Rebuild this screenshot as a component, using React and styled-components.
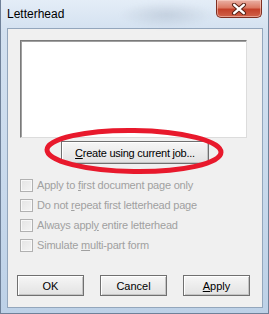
import React from 'react';
import styled, { createGlobalStyle } from 'styled-components';

const GlobalStyle = createGlobalStyle`
  html, body {
    margin: 0;
    padding: 0;
    background: #c9daed;
  }
  * {
    box-sizing: border-box;
  }
`;

const Window = styled.div`
  position: relative;
  width: 269px;
  height: 314px;
  display: flex;
  flex-direction: column;
  overflow: hidden;
  border: 1px solid #6f8199;
  border-top: 0;
  background: linear-gradient(180deg, #e4edf7 0%, #d3e1f0 10%, #c8d9ec 60%, #bdd1e7 100%);
  font-family: 'Liberation Sans', Arial, sans-serif;
`;

const Haze = styled.div`
  position: absolute;
  left: 118px;
  top: 2px;
  width: 95px;
  height: 26px;
  background: radial-gradient(ellipse at center, rgba(150, 165, 185, 0.35) 0%, rgba(150, 165, 185, 0) 70%);
  filter: blur(2px);
`;

const TitleBar = styled.div`
  position: relative;
  height: 28px;
  display: flex;
  align-items: flex-start;
  padding-left: 6px;
`;

const Title = styled.span`
  padding-top: 7px;
  font-size: 12px;
  line-height: 15px;
  color: #000;
`;

const CloseButton = styled.div`
  margin-left: auto;
  margin-right: 6px;
  width: 46px;
  height: 18px;
  display: flex;
  align-items: center;
  justify-content: center;
  border: 1px solid #7e2f22;
  border-top: 0;
  border-radius: 0 0 5px 5px;
  background: linear-gradient(180deg, #eab2a6 0%, #dc7a64 45%, #c4412a 55%, #d0624a 100%);
  box-shadow: inset 0 0 0 1px rgba(255, 220, 210, 0.5);
`;

const Client = styled.div`
  flex: 1;
  margin: 0 5px 5px 6px;
  display: flex;
  flex-direction: column;
  padding-top: 11px;
  background: #f0f0f0;
  border: 1px solid #93a6bc;
  font-size: 11px;
  letter-spacing: -0.2px;
`;

const Upper = styled.div`
  display: flex;
  flex-direction: column;
  padding-left: 12px;
`;

const ListBox = styled.div`
  width: 227px;
  height: 98px;
  background: #fff;
  border-style: solid;
  border-width: 1px;
  border-color: #7a7a7a #dcdcdc #dcdcdc #7a7a7a;
  box-shadow: inset 1px 1px 0 #a0a0a0;
`;

const CreateWrap = styled.div`
  position: relative;
  margin: 3px 0 0 41px;
  width: 148px;
`;

const Button = styled.button`
  width: ${p => p.$w || 67}px;
  height: ${p => p.$h || 21}px;
  padding: 0;
  font-family: 'Liberation Sans', Arial, sans-serif;
  font-size: 11px;
  letter-spacing: ${p => (p.$tight ? '-0.25px' : '0')};
  color: #000;
  background: linear-gradient(180deg, #f6f6f6 0%, #ececec 50%, #e2e2e2 100%);
  border: 1px solid #707070;
  box-shadow: inset 1px 1px 0 #fff, inset -1px -1px 0 #c4c4c4;
  display: flex;
  align-items: center;
  justify-content: center;
`;

const Ring = styled.svg`
  position: absolute;
  left: -18px;
  top: -13px;
  width: 182px;
  height: 47px;
  pointer-events: none;
  overflow: visible;
`;

const Checks = styled.div`
  display: flex;
  flex-direction: column;
  gap: 7px;
  margin-top: 15px;
`;

const CheckRow = styled.div`
  display: flex;
  align-items: center;
  gap: 4px;
  height: 13px;
  color: #a0a0a0;
  line-height: 13px;
`;

const Box = styled.span`
  width: 13px;
  height: 13px;
  border: 1px solid #b1b1b1;
  background: linear-gradient(135deg, #e4e4e4 0%, #f4f4f4 100%);
  box-shadow: inset 0 0 0 1px #f8f8f8;
`;

const Key = styled.span`
  text-decoration: underline;
  text-underline-offset: 1px;
`;

const ButtonRow = styled.div`
  display: flex;
  gap: 16px;
  margin-top: 23px;
  padding-left: 9px;
`;

const checks = [
  ['Apply to ', 'f', 'irst document page only'],
  ['Do not ', 'r', 'epeat first letterhead page'],
  ['Always appl', 'y', ' entire letterhead'],
  ['Simulate ', 'm', 'ulti-part form'],
];

export default function App() {
  return (
    <>
      <GlobalStyle />
      <Window>
        <Haze />
        <TitleBar>
          <Title>Letterhead</Title>
          <CloseButton>
            <svg width="16" height="12" viewBox="0 0 16 12">
              <path
                d="M3.2 1.8 L12.8 10.2 M12.8 1.8 L3.2 10.2"
                stroke="#5a2418"
                strokeWidth="4.4"
                strokeLinecap="round"
                fill="none"
              />
              <path
                d="M3.2 1.8 L12.8 10.2 M12.8 1.8 L3.2 10.2"
                stroke="#fff"
                strokeWidth="2.4"
                strokeLinecap="round"
                fill="none"
              />
            </svg>
          </CloseButton>
        </TitleBar>
        <Client>
          <Upper>
            <ListBox />
            <CreateWrap>
              <Button $w={148} $h={23} $tight>
                <span>
                  <Key>C</Key>reate using current job...
                </span>
              </Button>
              <Ring viewBox="0 0 182 47">
                <ellipse
                  cx="91"
                  cy="23"
                  rx="87"
                  ry="20.5"
                  fill="none"
                  stroke="#e8192c"
                  strokeWidth="5"
                  transform="rotate(0.8 91 23)"
                />
              </Ring>
            </CreateWrap>
            <Checks>
              {checks.map(([a, k, b]) => (
                <CheckRow key={a + b}>
                  <Box />
                  <span>
                    {a}
                    <Key>{k}</Key>
                    {b}
                  </span>
                </CheckRow>
              ))}
            </Checks>
          </Upper>
          <ButtonRow>
            <Button>OK</Button>
            <Button>Cancel</Button>
            <Button>
              <span>
                <Key>A</Key>pply
              </span>
            </Button>
          </ButtonRow>
        </Client>
      </Window>
    </>
  );
}
